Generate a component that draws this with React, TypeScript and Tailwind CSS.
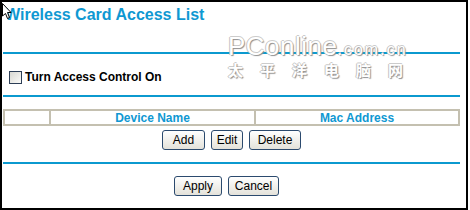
import React from "react";

const btn =
  "h-[20px] rounded-[3px] border border-[#2b4a6e] bg-linear-to-b from-white to-[#e4e2da] text-[12px] text-black leading-none flex items-center justify-center";

export default function App() {
  return (
    <div className="relative w-[470px] h-[210px] bg-white font-['Liberation_Sans',Arial,sans-serif]">
      <div className="w-[468px] h-[210px] border-2 border-black pl-[1px] pr-[6px] flex flex-col">
        {/* Title */}
        <h1 className="pt-[4px] pl-[2px] text-[16px] leading-[18px] font-bold text-[#0f98d2]">
          Wireless Card Access List
        </h1>
        <div className="mt-[28px] h-[2px] bg-[#0b99cf]" />

        {/* Access control */}
        <label className="mt-[16px] pl-[6px] flex items-center gap-[3px]">
          <span className="w-[13px] h-[13px] border border-[#2c3e56] bg-linear-to-br from-[#d8d8d2] to-[#fafaf8]" />
          <span className="text-[12px] leading-[14px] font-bold text-black">Turn Access Control On</span>
        </label>
        <div className="mt-[11px] h-[2px] bg-[#0b99cf]" />

        {/* Table header */}
        <div className="mt-[12px] h-[17px] flex border-2 border-[#c4c0b0] text-[12px] font-bold text-[#0f98d2]">
          <div className="w-[44px]" />
          <div className="w-[205px] border-l-2 border-[#c4c0b0] flex items-center justify-center">Device Name</div>
          <div className="flex-1 border-l-2 border-[#c4c0b0] flex items-center justify-center">Mac Address</div>
        </div>

        <div className="mt-[4px] flex justify-center gap-[6px]">
          <button className={`${btn} w-[43px]`}>Add</button>
          <button className={`${btn} w-[32px]`}>Edit</button>
          <button className={`${btn} w-[52px]`}>Delete</button>
        </div>
        <div className="mt-[12px] h-[2px] bg-[#0b99cf]" />

        <div className="mt-[12px] pr-[10px] flex justify-center gap-[6px]">
          <button className={`${btn} w-[48px]`}>Apply</button>
          <button className={`${btn} w-[51px]`}>Cancel</button>
        </div>
      </div>

      {/* watermark */}
      <div className="absolute left-[228px] top-[35px] text-white [text-shadow:1px_1px_1px_#8f8f8f,-1px_0_0_#c4c4c4,0_-1px_0_#cccccc] pointer-events-none">
        <div className="flex items-baseline leading-[22px]">
          <span className="text-[26px] tracking-[0.5px]">PConline</span>
          <span className="text-[16px] tracking-[2px]">.com.cn</span>
        </div>
        <div className="mt-[1px] text-[15px] leading-[15px] tracking-[17px] font-bold font-['Noto_Sans_CJK_SC',sans-serif]">
          太平洋电脑网
        </div>
      </div>

      {/* mouse pointer */}
      <svg className="absolute left-[2px] top-[3px]" width="10" height="17" viewBox="0 0 10 17">
        <path d="M0.5 0.5 L0.5 13 L3.5 10.5 L5.5 15.5 L7.5 14.5 L5.5 9.5 L9 9.5 Z" fill="white" stroke="black" strokeWidth="1" />
      </svg>
    </div>
  );
}
